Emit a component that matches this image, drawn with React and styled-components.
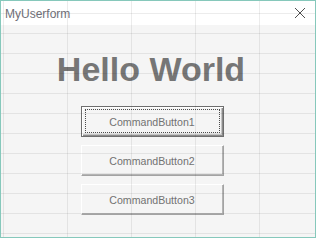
import React from 'react'
import styled, { createGlobalStyle } from 'styled-components'

const GlobalStyle = createGlobalStyle`
  html, body {
    margin: 0;
    padding: 0;
    background: #f5f5f5;
  }
  * { box-sizing: border-box; }
`

const Window = styled.div`
  position: relative;
  width: 316px;
  height: 238px;
  border: 1px solid #86c8bb;
  display: flex;
  flex-direction: column;
  background: #f5f5f5;
  overflow: hidden;
  font-family: "Liberation Sans", Arial, sans-serif;
`

const GridOverlay = styled.div`
  position: absolute;
  inset: 0;
  pointer-events: none;
  background-image:
    linear-gradient(to right, rgba(0, 0, 0, 0.075) 1px, transparent 1px),
    linear-gradient(to bottom, rgba(0, 0, 0, 0.075) 1px, transparent 1px);
  background-size: 64px 20px;
  background-position: 2px 12px;
`

const TitleBar = styled.div`
  height: 24px;
  background: #ffffff;
  display: flex;
  align-items: center;
  justify-content: space-between;
  padding: 0 9px 0 4px;
`

const Title = styled.span`
  font-size: 12px;
  color: #6f6f78;
  padding-top: 1px;
`

const CloseButton = styled.button`
  width: 12px;
  height: 12px;
  padding: 0;
  border: 0;
  background: none;
  display: flex;
  align-items: center;
  justify-content: center;
`

const Body = styled.div`
  flex: 1;
  display: flex;
  flex-direction: column;
  align-items: center;
  padding: 27px 14px 0 0;
`

const Heading = styled.h1`
  margin: 0;
  font-size: 34px;
  line-height: 34px;
  font-weight: bold;
  color: #767676;
`

const ButtonStack = styled.div`
  display: flex;
  flex-direction: column;
  gap: 8px;
  margin-top: 20px;
  margin-left: 2px;
`

const CommandButton = styled.button`
  position: relative;
  width: 143px;
  height: 31px;
  padding: 0;
  background: transparent;
  font-family: "Liberation Sans", Arial, sans-serif;
  font-size: 10.6px;
  color: #727272;
  border: 1px solid;
  border-color: ${p => (p.$focused ? '#6e6e6e' : '#ffffff #a3a3a3 #a3a3a3 #ffffff')};
  box-shadow: ${p =>
    p.$focused
      ? 'inset 1px 1px #ffffff, inset -1px -1px #8c8c8c, inset -2px -2px #c4c4c4'
      : 'inset -1px -1px #b4b4b4'};

  &::after {
    content: '';
    display: ${p => (p.$focused ? 'block' : 'none')};
    position: absolute;
    inset: 2px 3px 3px 3px;
    border: 1px dotted #4a4a4a;
  }
`

export default function App() {
  return (
    <>
      <GlobalStyle />
      <Window>
        <TitleBar>
          <Title>MyUserform</Title>
          <CloseButton aria-label="Close">
            <svg width="12" height="12" viewBox="0 0 12 12">
              <path d="M1 1 L11 11 M11 1 L1 11" stroke="#505050" strokeWidth="1" />
            </svg>
          </CloseButton>
        </TitleBar>
        <Body>
          <Heading>Hello World</Heading>
          <ButtonStack>
            <CommandButton $focused>CommandButton1</CommandButton>
            <CommandButton>CommandButton2</CommandButton>
            <CommandButton>CommandButton3</CommandButton>
          </ButtonStack>
        </Body>
        <GridOverlay />
      </Window>
    </>
  )
}
